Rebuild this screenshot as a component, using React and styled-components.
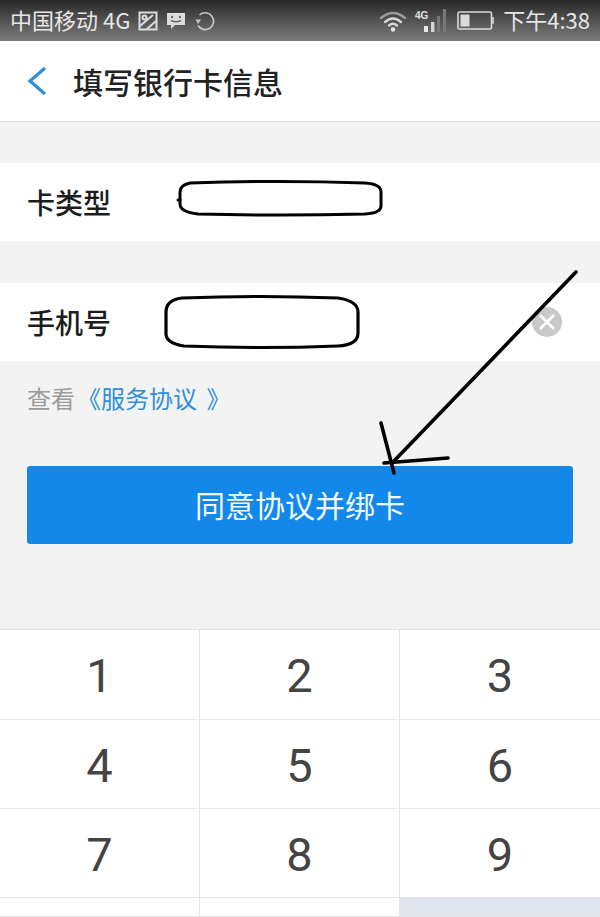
import React from "react";
import styled, { createGlobalStyle } from "styled-components";

const cjk = `"Noto Sans CJK SC", "Noto Sans", sans-serif`;

const GlobalStyle = createGlobalStyle`
  html, body {
    margin: 0;
    padding: 0;
    background: #f3f3f3;
  }
  * {
    box-sizing: border-box;
  }
`;

const Page = styled.div`
  position: relative;
  width: 600px;
  height: 917px;
  overflow: hidden;
  display: flex;
  flex-direction: column;
  background: #f3f3f3;
  font-family: ${cjk};
`;

const StatusBar = styled.div`
  height: 41px;
  flex: none;
  display: flex;
  align-items: center;
  justify-content: space-between;
  padding: 0 10px 0 10px;
  background: linear-gradient(#282828, #7c7c7c);
  color: #e6e6e6;
`;

const StatusGroup = styled.div`
  display: flex;
  align-items: center;
  gap: ${(p) => p.$gap || 0}px;
`;

const StatusText = styled.span`
  margin-top: -3px;
  font-size: 22px;
  line-height: 24px;
  font-family: ${cjk};
  white-space: nowrap;
`;

const Header = styled.div`
  height: 81px;
  flex: none;
  display: flex;
  align-items: center;
  padding-left: 27px;
  background: #fff;
  border-bottom: 1px solid #dcdcdc;
`;

const Title = styled.h1`
  margin: 0 0 0 26px;
  font-size: 30px;
  font-weight: 500;
  line-height: 40px;
  color: #222;
`;

const Row = styled.div`
  height: 78px;
  flex: none;
  display: flex;
  align-items: center;
  justify-content: space-between;
  margin-top: ${(p) => p.$top}px;
  padding: 0 38px 0 27px;
  background: #fff;
`;

const RowLabel = styled.span`
  font-size: 28px;
  font-weight: 500;
  line-height: 40px;
  color: #1c1c1c;
`;

const ClearButton = styled.span`
  width: 30px;
  height: 30px;
  display: flex;
  align-items: center;
  justify-content: center;
  border-radius: 50%;
  background: #c8c8c8;
`;

const AgreementLine = styled.div`
  height: 72px;
  flex: none;
  display: flex;
  align-items: center;
  padding-left: 27px;
  font-size: 24px;
  color: #9b9b9b;
  margin-bottom: 33px;
`;

const AgreementLink = styled.span`
  margin-left: 2px;
  word-spacing: 4px;
  color: #2f8fd8;
`;

const SubmitButton = styled.button`
  flex: none;
  height: 78px;
  margin: 0 27px;
  padding: 0 0 3px;
  border: none;
  border-radius: 3px;
  background: #1289ea;
  color: #f4f8fc;
  font-family: ${cjk};
  font-size: 30px;
  cursor: pointer;
`;

const Keypad = styled.div`
  margin-top: 85px;
  flex: 1;
  display: grid;
  grid-template-columns: 200px 200px 200px;
  grid-template-rows: 90px 89px 89px 1fr;
  border-top: 1px solid #e4e4e4;
  background: #fff;
`;

const Key = styled.div`
  display: flex;
  align-items: center;
  justify-content: center;
  padding-top: 2px;
  font-family: Roboto, "Liberation Sans", sans-serif;
  font-size: 47px;
  color: #444;
  background: ${(p) => (p.$muted ? "#e1e5ef" : "#fff")};
  border-bottom: 1px solid #e6e6e6;
  border-right: ${(p) => (p.$last ? "none" : "1px solid #e6e6e6")};
`;

const Doodles = styled.svg`
  position: absolute;
  left: 0;
  top: 0;
  pointer-events: none;
`;

const GalleryIcon = () => (
  <svg width="20" height="20" viewBox="0 0 20 20" fill="none" stroke="#dcdcdc" strokeWidth="2">
    <rect x="1.5" y="1.5" width="17" height="17" />
    <circle cx="6.5" cy="6.5" r="2" />
    <path d="M2 15 L15 4" />
    <path d="M9 18 L18 10" />
  </svg>
);

const ChatIcon = () => (
  <svg width="20" height="20" viewBox="0 0 20 20">
    <path d="M1 2 H19 V14 H9 L5 18 V14 H1 Z" fill="#dcdcdc" />
    <circle cx="6" cy="6" r="1.2" fill="#6a6a6a" />
    <circle cx="14" cy="6" r="1.2" fill="#6a6a6a" />
    <path d="M5 9.5 Q10 12 15 9.5" stroke="#6a6a6a" strokeWidth="1.4" fill="none" />
  </svg>
);

const SyncIcon = () => (
  <svg width="22" height="22" viewBox="0 0 22 22" fill="none" stroke="#c8c8c8" strokeWidth="1.6">
    <path d="M5.5 5 A8.4 8.4 0 1 1 4 15.5" />
    <path d="M1.5 9.5 L7 9.5 L4 14 Z" fill="#c8c8c8" stroke="none" />
  </svg>
);

const WifiIcon = () => (
  <svg width="28" height="22" viewBox="0 0 28 22" fill="none" strokeLinecap="round">
    <path d="M2 8 Q14 -2 26 8" stroke="#9a9a9a" strokeWidth="2.4" />
    <path d="M6 12 Q14 5 22 12" stroke="#d8d8d8" strokeWidth="2.4" />
    <path d="M10 15.5 Q14 12 18 15.5" stroke="#d8d8d8" strokeWidth="2.4" />
    <circle cx="14" cy="19.5" r="2.2" fill="#e6e6e6" />
  </svg>
);

const SignalIcon = () => (
  <svg width="34" height="26" viewBox="0 0 34 26">
    <text x="0" y="11" fontSize="10" fontWeight="700" fontFamily="Liberation Sans, sans-serif" fill="#e0e0e0">
      4G
    </text>
    <rect x="9" y="18" width="4" height="6" fill="#e8e8e8" />
    <rect x="16" y="14" width="3.4" height="10" fill="#d8d8d8" />
    <rect x="22" y="8" width="3" height="16" fill="#787878" />
    <rect x="28" y="1" width="3" height="23" fill="#787878" />
  </svg>
);

const BatteryIcon = () => (
  <svg width="38" height="20" viewBox="0 0 38 20" fill="none">
    <rect x="1" y="1" width="33.5" height="17" rx="1.5" stroke="#dadada" strokeWidth="1.6" />
    <rect x="3.5" y="3.5" width="9" height="12" fill="#dadada" />
    <rect x="35" y="6" width="2" height="7" fill="#bdbdbd" />
  </svg>
);

const BackIcon = () => (
  <svg width="20" height="30" viewBox="0 0 20 30" fill="none" stroke="#2f8fd8" strokeWidth="3.2">
    <path d="M18 2 L3 15 L18 28" />
  </svg>
);

const App = () => {
  const keys = ["1", "2", "3", "4", "5", "6", "7", "8", "9", "", "", ""];

  return (
    <Page>
      <GlobalStyle />
      <StatusBar>
        <StatusGroup $gap={8}>
          <StatusText>中国移动 4G</StatusText>
          <GalleryIcon />
          <ChatIcon />
          <SyncIcon />
        </StatusGroup>
        <StatusGroup $gap={8}>
          <WifiIcon />
          <SignalIcon />
          <BatteryIcon />
          <StatusText>下午4:38</StatusText>
        </StatusGroup>
      </StatusBar>

      <Header>
        <BackIcon />
        <Title>填写银行卡信息</Title>
      </Header>

      <Row $top={41}>
        <RowLabel>卡类型</RowLabel>
      </Row>
      <Row $top={42}>
        <RowLabel>手机号</RowLabel>
        <ClearButton>
          <svg width="18" height="18" viewBox="0 0 18 18" stroke="#fff" strokeWidth="2.6">
            <path d="M2 2 L16 16 M16 2 L2 16" />
          </svg>
        </ClearButton>
      </Row>

      <AgreementLine>
        查看<AgreementLink>《服务协议 》</AgreementLink>
      </AgreementLine>

      <SubmitButton>同意协议并绑卡</SubmitButton>

      <Keypad>
        {keys.map((k, i) => (
          <Key key={i} $last={i % 3 === 2} $muted={i === 11}>
            {k}
          </Key>
        ))}
      </Keypad>

      {/* marker scribbles drawn over the screenshot */}
      <Doodles width="600" height="917" viewBox="0 0 600 917" fill="none" stroke="#000" strokeLinecap="round">
        <path
          d="M190 183 Q280 180 365 183 Q381 184 381 192 L381 206 Q381 213 365 214 Q280 216 198 214 Q180 212 180 204 L180 192 Q180 185 190 183 Z"
          fill="#fff"
          strokeWidth="3"
        />
        <path d="M178 200 L180 200" strokeWidth="3" />
        <path
          d="M182 298 Q260 295 338 298 Q358 301 358 312 L358 333 Q358 345 338 346 Q260 349 184 346 Q166 343 166 334 L166 312 Q166 300 182 298 Z"
          fill="#fff"
          strokeWidth="3.2"
        />
        <path d="M576 272 L394 461" strokeWidth="3.6" />
        <path d="M381 423 L394 473" strokeWidth="3.6" />
        <path d="M384 463 L448 458" strokeWidth="3.6" />
      </Doodles>
    </Page>
  );
};

export default App;
